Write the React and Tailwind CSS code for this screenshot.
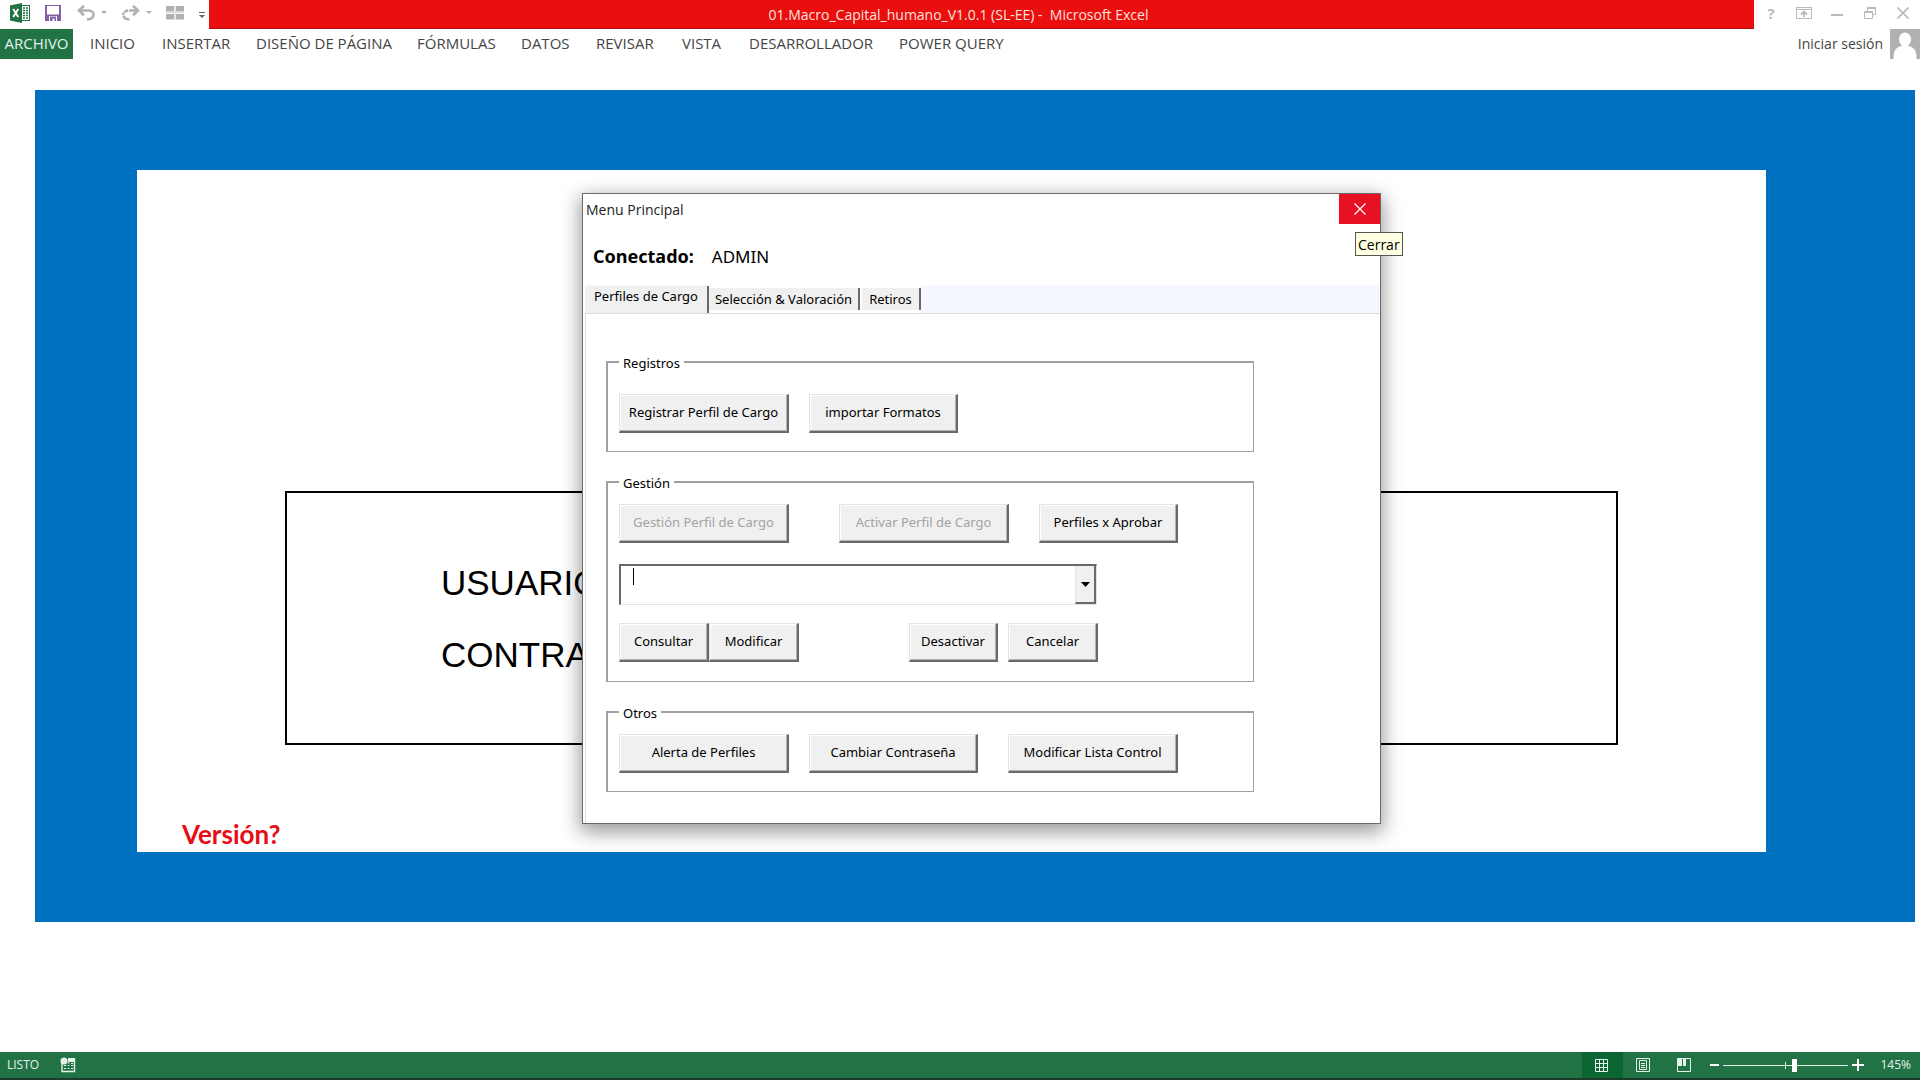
import React from "react";

const UI = "font-['Open_Sans','Noto_Sans',sans-serif]";
const FORM = "font-['Noto_Sans','Open_Sans',sans-serif]";

const ribbonTabs = [
  { label: "INICIO", width: "w-[72px]" },
  { label: "INSERTAR", width: "w-[94px]" },
  { label: "DISEÑO DE PÁGINA", width: "w-[161px]" },
  { label: "FÓRMULAS", width: "w-[104px]" },
  { label: "DATOS", width: "w-[75px]" },
  { label: "REVISAR", width: "w-[86px]" },
  { label: "VISTA", width: "w-[67px]" },
  { label: "DESARROLLADOR", width: "w-[150px]" },
  { label: "POWER QUERY", width: "w-[130px]" },
];

function ExcelLogo() {
  return (
    <svg width="20" height="20" viewBox="0 0 20 20" aria-hidden="true">
      <rect x="10.5" y="2.5" width="9" height="15" fill="#fff" stroke="#217346" />
      <path d="M13 5h2M16 5h2M13 7.500h2M16 7.500h2M13 10h2M16 10h2M13 12.500h2M16 12.500h2M13 15h2M16 15h2" stroke="#217346" strokeWidth="1.400" />
      <path d="M0 2.500 12 0v20L0 17.500z" fill="#217346" />
      <path d="M3.200 6 8.300 14M8.300 6 3.200 14" stroke="#fff" strokeWidth="1.900" />
    </svg>
  );
}

function SaveIcon() {
  return (
    <svg width="16" height="16" viewBox="0 0 16 16" aria-hidden="true">
      <path d="M0 0h16v16H0z" fill="#8560a5" />
      <path d="M2 1h12v8.500H2zM4 11h8v5H4z" fill="#fff" />
      <path d="M5 11.500h6V16H9.500v-2.500h-2V16H5z" fill="#8560a5" />
    </svg>
  );
}

function UndoIcon() {
  return (
    <svg width="19" height="16" viewBox="0 0 19 16" fill="none" stroke="#b1b1b1" aria-hidden="true">
      <path d="M2 5.500h9.500c7 0 7 8.500-1.500 9" strokeWidth="2.600" />
      <path d="M7 .8 2 5.500l5 4.700" strokeWidth="2.600" />
    </svg>
  );
}

function RedoIcon() {
  return (
    <svg width="19" height="16" viewBox="0 0 19 16" fill="none" stroke="#b1b1b1" aria-hidden="true">
      <path d="M17 5.500H8c-7.500 0-8 8.500.5 9" strokeWidth="2.600" strokeDasharray="9 .8 4 .8 2.500 .8" />
      <path d="m12 .8 5 4.700-5 4.700" strokeWidth="2.600" />
    </svg>
  );
}

function Caret() {
  return (
    <svg width="6" height="3" viewBox="0 0 6 3" aria-hidden="true">
      <path d="M0 0h6L3 3z" fill="#b1b1b1" />
    </svg>
  );
}

function TitleBar() {
  return (
    <header className="flex h-[29px] items-stretch">
      <div className="flex w-[209px] shrink-0 items-center pl-[10px] pb-1">
        <ExcelLogo />
        <button aria-label="Guardar" className="ml-[15px]"><SaveIcon /></button>
        <button aria-label="Deshacer" className="ml-4 flex items-center gap-[5px]"><UndoIcon /><Caret /></button>
        <button aria-label="Rehacer" className="ml-[14px] flex items-center gap-[6px]"><RedoIcon /><Caret /></button>
        <button aria-label="Vista" className="ml-[14px]">
          <svg width="18" height="14" viewBox="0 0 18 14" aria-hidden="true">
            <path d="M0 0h8v5.500H0zM10 0h8v5.500h-8zM0 8h8v5.500H0zM10 8h8v5.500h-8z" fill="#b1b1b1" />
            <path d="M9 0v14M0 6.700h18" stroke="#d4d4d4" />
          </svg>
        </button>
        <button aria-label="Personalizar barra" className="ml-[15px] pt-1">
          <svg width="6" height="6" viewBox="0 0 6 6" aria-hidden="true">
            <path d="M0 .5h6" stroke="#666" />
            <path d="M0 3h6L3 6z" fill="#666" />
          </svg>
        </button>
      </div>
      <h1 className="flex flex-1 items-center justify-center whitespace-pre border-b border-[#b01010] bg-[#ea0e0e] text-[14px] text-[#fbe3df] pr-[46px]">
        01.Macro_Capital_humano_V1.0.1 (SL-EE) -  Microsoft Excel
      </h1>
      <div className="flex w-[166px] shrink-0 items-center pb-[3px] pl-[13px] text-[#b9b9b9]">
        <button aria-label="Ayuda" className="w-2 text-[15px] font-bold">?</button>
        <button aria-label="Opciones de cinta" className="ml-[21px]">
          <svg width="16" height="12" viewBox="0 0 16 12" fill="none" stroke="currentColor" aria-hidden="true">
            <path d="M.5.5h15v11H.5zM.5 2.500h15" />
            <path d="M8 10V4.500M5 7.500l3-3 3 3" strokeWidth="1.800" />
          </svg>
        </button>
        <button aria-label="Minimizar" className="ml-[19px] pt-1">
          <svg width="12" height="2" aria-hidden="true"><path d="M0 1h12" stroke="currentColor" strokeWidth="2" /></svg>
        </button>
        <button aria-label="Restaurar" className="ml-[21px]">
          <svg width="12" height="12" viewBox="0 0 12 12" fill="none" stroke="currentColor" aria-hidden="true">
            <path d="M.5 4.500h8v7h-8zM.5 5.500h8M3.500 4.500v-4h8v7h-3M3.500 1.500h8" />
          </svg>
        </button>
        <button aria-label="Cerrar Excel" className="ml-[21px]">
          <svg width="12" height="12" viewBox="0 0 12 12" stroke="currentColor" strokeWidth="1.600" aria-hidden="true">
            <path d="m.5.5 11 11m0-11-11 11" />
          </svg>
        </button>
      </div>
    </header>
  );
}

function Ribbon() {
  return (
    <nav className="flex h-[30px] items-stretch text-[15px] text-[#444]">
      <button className="w-[73px] bg-[#217346] pb-[2px] text-[#e3f3ea]">ARCHIVO</button>
      <div className="flex pl-[17px]">
        {ribbonTabs.map((t) => (
          <button key={t.label} className={`${t.width} whitespace-nowrap pb-[2px] text-left`}>{t.label}</button>
        ))}
      </div>
      <div className="ml-auto flex items-stretch gap-[7px]">
        <button className="pb-[2px] text-[14px]">Iniciar sesión</button>
        <svg width="30" height="30" viewBox="0 0 30 30" aria-hidden="true">
          <path d="M0 0h30v30H0z" fill="#b1b1b1" />
          <ellipse cx="15" cy="10.500" rx="6" ry="7" fill="#fff" />
          <path d="M3.500 30c0-8 1.500-11 7.500-13h8c6 2 7.500 5 7.500 13z" fill="#fff" />
        </svg>
      </div>
    </nav>
  );
}

function FormButton({ children, className, disabled }) {
  return (
    <button
      disabled={disabled}
      className={`h-[39px] shrink-0 whitespace-nowrap border-2 border-t border-l border-t-[#e3e3e3] border-l-[#e3e3e3] border-b-[#696969] border-r-[#696969] bg-[#f0f0f0] text-black shadow-[inset_-1px_-1px_0_#b4b4b4,inset_1px_1px_0_#fff] disabled:text-[#a3a3a3] ${className}`}
    >
      {children}
    </button>
  );
}

function Group({ title, className, children }) {
  return (
    <fieldset className={`w-[648px] border border-t-2 border-l-2 border-[#a0a0a0] pl-[11px] ${className}`}>
      <legend className="h-5 px-1 leading-[22px]">{title}</legend>
      {children}
    </fieldset>
  );
}

function Dialog() {
  return (
    <section
      role="dialog"
      aria-label="Menu Principal"
      className={`absolute left-[547px] top-[103px] w-[799px] border border-[#6b6b6b] bg-white text-[13px] text-black shadow-[0_6px_18px_2px_rgba(0,0,0,0.4)] ${FORM}`}
    >
      <div className="flex h-[30px] items-stretch justify-between pl-[3px]">
        <h2 className={`flex items-center text-[14px] text-[#222] ${UI}`}>Menu Principal</h2>
        <button aria-label="Cerrar" className="flex w-[41px] items-center justify-center bg-[#e81123]">
          <svg width="12" height="12" viewBox="0 0 12 12" stroke="#fff" strokeWidth="1.200" aria-hidden="true">
            <path d="m.5.5 11 11m0-11-11 11" />
          </svg>
        </button>
      </div>
      <div role="tooltip" className={`absolute left-[772px] top-[38px] flex h-6 items-center whitespace-nowrap border border-[#555] bg-[#ffffe1] px-[2px] text-[14px] ${UI}`}>
        Cerrar
      </div>

      <p className="flex h-[61px] items-center gap-[18px] pl-[10px] pt-1 text-[17px]">
        <strong className="text-[18px]">Conectado:</strong>
        <span>ADMIN</span>
      </p>

      <div className="pl-[2px]">
        <div role="tablist" className="flex h-[29px] items-end border-b border-[#dcdcdc] bg-[#f4f7fe]">
          <button role="tab" aria-selected="true" className="h-[27px] w-[124px] whitespace-nowrap border-r-2 border-[#696969] bg-[#f0f0f0] pb-[6px] text-center">
            Perfiles de Cargo
          </button>
          <div className="flex h-full items-end bg-white pb-[3px]">
            <button role="tab" aria-selected="false" className="h-[22px] w-[151px] whitespace-nowrap border-r-2 border-[#696969] bg-[#f0f0f0] text-center leading-[22px]">
              Selección &amp; Valoración
            </button>
            <button role="tab" aria-selected="false" className="ml-[2px] h-[22px] w-[59px] border-r-2 border-[#696969] bg-[#f0f0f0] text-center leading-[22px]">
              Retiros
            </button>
          </div>
        </div>

        <div role="tabpanel" className="flex flex-col gap-5 border-l border-[#dcdcdc] pb-[31px] pl-5 pt-[38px]">
          <Group title="Registros" className="pb-[18px] pt-[22px]">
            <div className="flex gap-5">
              <FormButton className="w-[170px]">Registrar Perfil de Cargo</FormButton>
              <FormButton className="w-[149px]">importar Formatos</FormButton>
            </div>
          </Group>

          <Group title="Gestión" className="pb-[19px] pt-3">
            <div className="flex">
              <FormButton disabled className="w-[170px]">Gestión Perfil de Cargo</FormButton>
              <FormButton disabled className="ml-[50px] w-[170px]">Activar Perfil de Cargo</FormButton>
              <FormButton className="ml-[30px] w-[139px]">Perfiles x Aprobar</FormButton>
            </div>
            <div className="relative mt-[21px] flex h-[41px] w-[478px] border border-l-2 border-t-2 border-b-[#e3e3e3] border-l-[#696969] border-r-[#e3e3e3] border-t-[#696969]">
              <input type="text" aria-label="Perfil de cargo" className="min-w-0 flex-1 bg-white px-3 outline-none" />
              <span className="absolute left-3 top-[2px] h-[17px] w-px bg-black" />
              <button aria-label="Mostrar lista" className="flex w-[21px] items-center justify-center border-b-2 border-l border-r-2 border-b-[#696969] border-l-[#e3e3e3] border-r-[#696969] bg-[#f0f0f0]">
                <svg width="9" height="5" viewBox="0 0 9 5" aria-hidden="true"><path d="M0 0h9L4.500 5z" fill="#000" /></svg>
              </button>
            </div>
            <div className="mt-[18px] flex">
              <FormButton className="w-[90px]">Consultar</FormButton>
              <FormButton className="w-[90px]">Modificar</FormButton>
              <FormButton className="ml-[110px] w-[89px]">Desactivar</FormButton>
              <FormButton className="ml-[10px] w-[90px]">Cancelar</FormButton>
            </div>
          </Group>

          <Group title="Otros" className="pb-[18px] pt-3">
            <div className="flex">
              <FormButton className="w-[170px]">Alerta de Perfiles</FormButton>
              <FormButton className="ml-5 w-[169px]">Cambiar Contraseña</FormButton>
              <FormButton className="ml-[30px] w-[170px]">Modificar Lista Control</FormButton>
            </div>
          </Group>
        </div>
      </div>
    </section>
  );
}

function StatusBar() {
  return (
    <footer className="flex h-7 items-stretch border-b-2 border-[#1c3c2a] bg-[#217346] text-[12px] text-[#e3f3ea]">
      <span className="flex items-center pl-[7px]">LISTO</span>
      <button aria-label="Grabar macro" className="ml-[21px] flex items-center">
        <svg width="16" height="16" viewBox="0 0 16 16" aria-hidden="true">
          <path d="M2 5v9.500h12.500V2H8" fill="none" stroke="#e3f3ea" strokeWidth="1.400" />
          <path d="M8 1h7v4H8z" fill="#e3f3ea" />
          <circle cx="4" cy="4" r="3.500" fill="#e3f3ea" />
          <path d="M4 8.500h2M7.500 8.500h2M11 8.500h2M4 11.500h2M7.500 11.500h2M11 11.500h2M7.500 6h2M11 6.500h2" stroke="#e3f3ea" />
        </svg>
      </button>
      <div className="ml-auto flex items-stretch">
        <button aria-label="Vista normal" className="flex w-[41px] items-center justify-center bg-[#0b6631] pr-[2px]">
          <svg width="13" height="13" viewBox="0 0 13 13" fill="none" stroke="currentColor" aria-hidden="true">
            <path d="M.5.5h12v12H.5zM4.500 0v13M8.500 0v13M0 4.500h13M0 8.500h13" />
          </svg>
        </button>
        <button aria-label="Diseño de página" className="flex w-[41px] items-center justify-center pr-[2px]">
          <svg width="14" height="14" viewBox="0 0 14 14" fill="none" stroke="currentColor" aria-hidden="true">
            <path d="M.5.5h13v13H.5zM3.500 2.500h7v9h-7zM5 5.500h4M5 7.500h4M5 9.500h4" />
          </svg>
        </button>
        <button aria-label="Vista de salto de página" className="flex w-[41px] items-center justify-center pr-[2px]">
          <svg width="14" height="14" viewBox="0 0 14 14" aria-hidden="true">
            <path d="M.5.5h13v13H.5z" fill="none" stroke="currentColor" />
            <path d="M1 1h4v7H1zM6 1h3v7H6z" fill="currentColor" />
          </svg>
        </button>
        <button aria-label="Alejar" className="ml-[5px] flex w-[9px] items-center">
          <svg width="9" height="2" aria-hidden="true"><path d="M0 1h9" stroke="#fff" strokeWidth="2" /></svg>
        </button>
        <div className="relative ml-1 flex items-center">
          <span className="absolute left-[62px] h-[7px] w-px bg-[#e3f3ea]" />
          <input
            type="range"
            aria-label="Zoom"
            min="0"
            max="1000"
            defaultValue="575"
            className="h-[14px] w-[125px] appearance-none bg-transparent [&::-webkit-slider-runnable-track]:h-px [&::-webkit-slider-runnable-track]:bg-[#e3f3ea] [&::-webkit-slider-thumb]:-mt-[6px] [&::-webkit-slider-thumb]:h-[13px] [&::-webkit-slider-thumb]:w-[5px] [&::-webkit-slider-thumb]:appearance-none [&::-webkit-slider-thumb]:bg-white"
          />
        </div>
        <button aria-label="Acercar" className="ml-1 flex items-center">
          <svg width="12" height="12" aria-hidden="true"><path d="M0 6h12M6 0v12" stroke="#fff" strokeWidth="2" /></svg>
        </button>
        <button className="w-[56px] pr-[9px] text-right">145%</button>
      </div>
    </footer>
  );
}

export default function App() {
  return (
    <div className={`flex min-h-screen flex-col bg-white ${UI}`}>
      <TitleBar />
      <Ribbon />
      <main className="flex-1 pt-[31px]">
        <div className="relative ml-[35px] mr-[5px] bg-[#0070c0] pb-[70px] pl-[102px] pr-[149px] pt-[80px]">
          <div className="bg-white px-[148px] pb-[2px] pt-[321px]">
            <div className="flex flex-col gap-8 border-2 border-black pb-[68px] pl-[154px] pt-[70px] font-['Liberation_Sans',sans-serif] text-[35px] leading-10 text-black">
              <span>USUARIO</span>
              <span>CONTRA</span>
            </div>
            <p className="-ml-[103px] mt-[73px] font-['Lato',sans-serif] text-[26px] font-bold leading-8 text-[#e80c14]">Versión?</p>
          </div>
          <Dialog />
        </div>
      </main>
      <StatusBar />
    </div>
  );
}
